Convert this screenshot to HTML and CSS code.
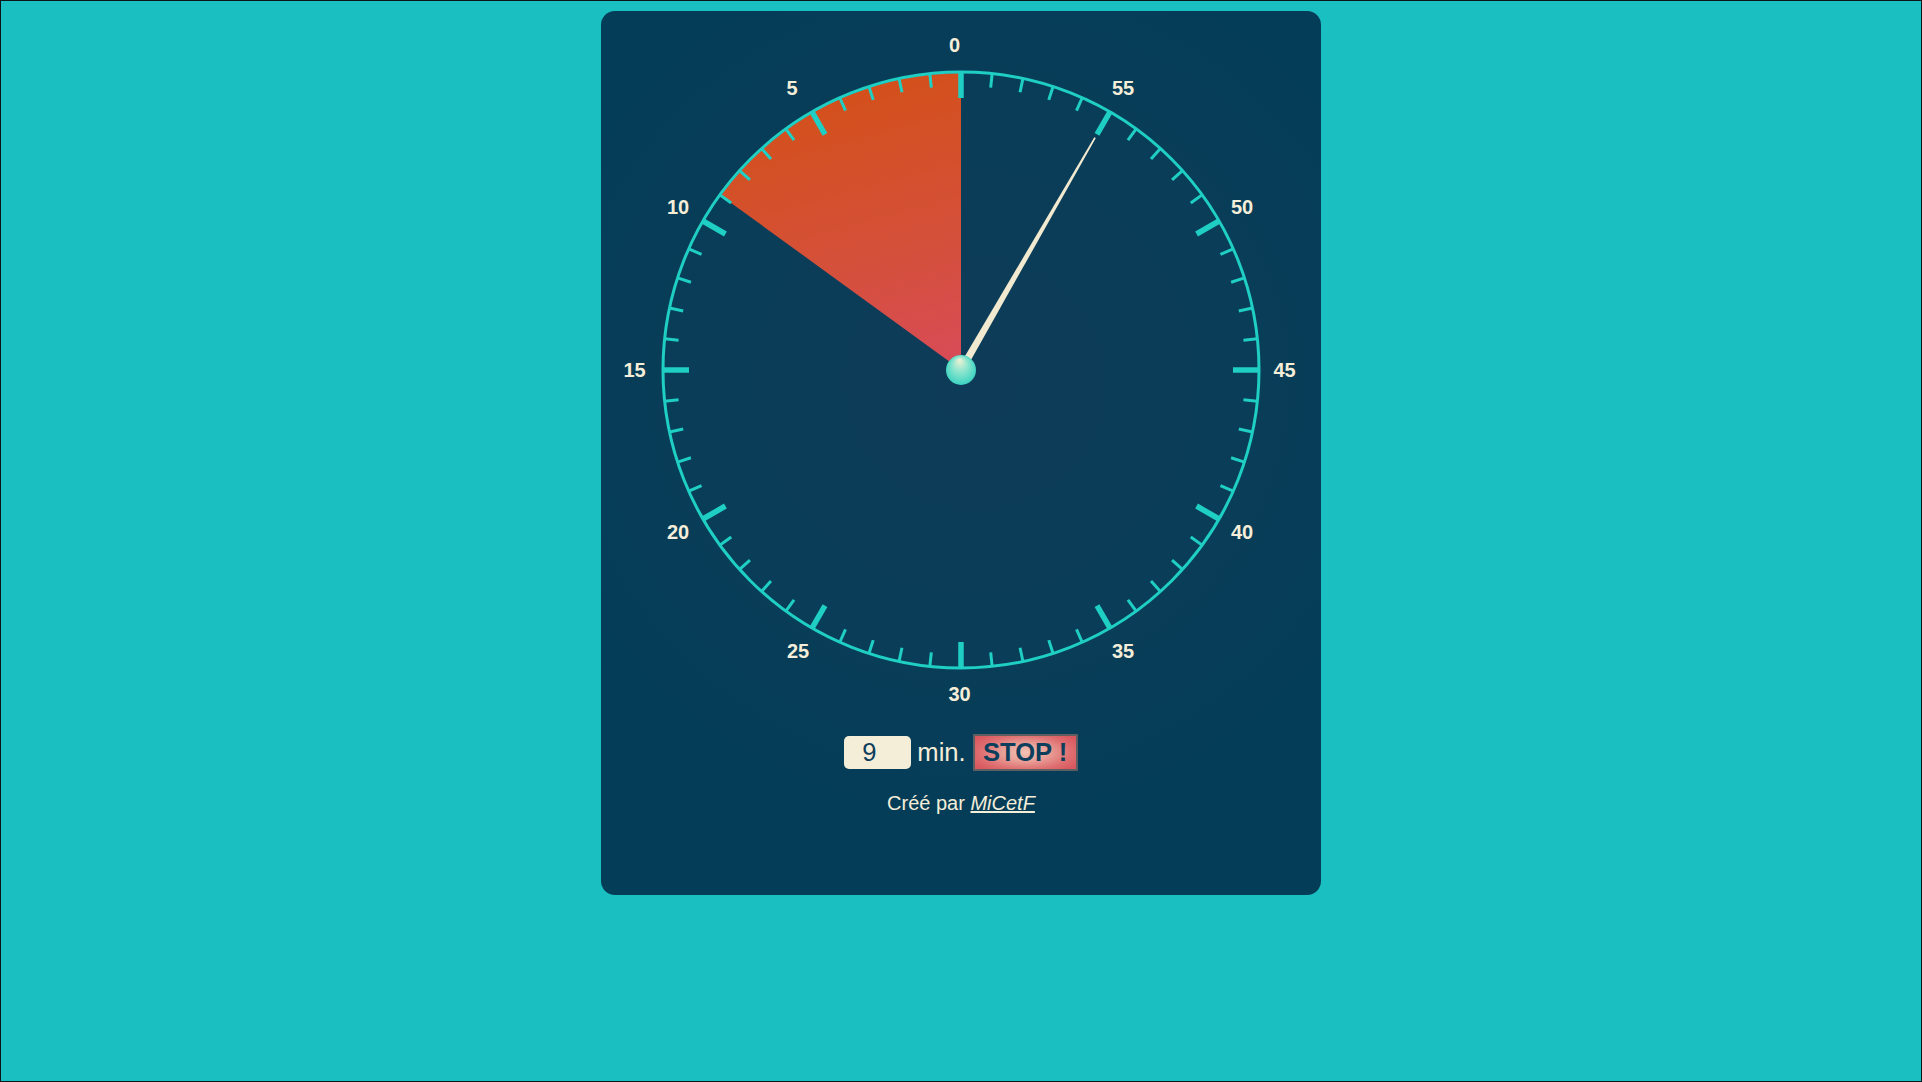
FILE: index.html
```html
<!DOCTYPE html>
<html lang="fr">
<head>
<meta charset="utf-8">
<title>Minuteur</title>
<link rel="stylesheet" href="styles.css">
</head>
<body>
<main class="card">
  <svg class="dial" width="720" height="705" viewBox="0 0 720 705" xmlns="http://www.w3.org/2000/svg">
    <defs>
      <linearGradient id="sectorGrad" gradientUnits="userSpaceOnUse" x1="300" y1="63" x2="380" y2="359">
        <stop offset="0" stop-color="#d3501b"/>
        <stop offset="0.55" stop-color="#d5503a"/>
        <stop offset="1" stop-color="#d84b5a"/>
      </linearGradient>
      <radialGradient id="knobGrad" cx="0.5" cy="0.5" r="0.55" fx="0.45" fy="0.15">
        <stop offset="0" stop-color="#f2f1d4"/>
        <stop offset="0.45" stop-color="#8fe6cf"/>
        <stop offset="1" stop-color="#33d2bf"/>
      </radialGradient>
      <line id="tkMaj" x1="360" y1="61" x2="360" y2="87" class="tick-major"/>
      <line id="tkMin" x1="360" y1="61" x2="360" y2="75" class="tick-minor"/>
    </defs>

    <path class="sector" d="M360 359 L360 62 A297 297 0 0 0 119.7 184.4 Z" fill="url(#sectorGrad)"/>

    <circle class="ring" cx="360" cy="359" r="298"/>

    <g class="ticks">
      <use href="#tkMaj"/>
      <use href="#tkMin" transform="rotate(6 360 359)"/>
      <use href="#tkMin" transform="rotate(12 360 359)"/>
      <use href="#tkMin" transform="rotate(18 360 359)"/>
      <use href="#tkMin" transform="rotate(24 360 359)"/>
      <use href="#tkMaj" transform="rotate(30 360 359)"/>
      <use href="#tkMin" transform="rotate(36 360 359)"/>
      <use href="#tkMin" transform="rotate(42 360 359)"/>
      <use href="#tkMin" transform="rotate(48 360 359)"/>
      <use href="#tkMin" transform="rotate(54 360 359)"/>
      <use href="#tkMaj" transform="rotate(60 360 359)"/>
      <use href="#tkMin" transform="rotate(66 360 359)"/>
      <use href="#tkMin" transform="rotate(72 360 359)"/>
      <use href="#tkMin" transform="rotate(78 360 359)"/>
      <use href="#tkMin" transform="rotate(84 360 359)"/>
      <use href="#tkMaj" transform="rotate(90 360 359)"/>
      <use href="#tkMin" transform="rotate(96 360 359)"/>
      <use href="#tkMin" transform="rotate(102 360 359)"/>
      <use href="#tkMin" transform="rotate(108 360 359)"/>
      <use href="#tkMin" transform="rotate(114 360 359)"/>
      <use href="#tkMaj" transform="rotate(120 360 359)"/>
      <use href="#tkMin" transform="rotate(126 360 359)"/>
      <use href="#tkMin" transform="rotate(132 360 359)"/>
      <use href="#tkMin" transform="rotate(138 360 359)"/>
      <use href="#tkMin" transform="rotate(144 360 359)"/>
      <use href="#tkMaj" transform="rotate(150 360 359)"/>
      <use href="#tkMin" transform="rotate(156 360 359)"/>
      <use href="#tkMin" transform="rotate(162 360 359)"/>
      <use href="#tkMin" transform="rotate(168 360 359)"/>
      <use href="#tkMin" transform="rotate(174 360 359)"/>
      <use href="#tkMaj" transform="rotate(180 360 359)"/>
      <use href="#tkMin" transform="rotate(186 360 359)"/>
      <use href="#tkMin" transform="rotate(192 360 359)"/>
      <use href="#tkMin" transform="rotate(198 360 359)"/>
      <use href="#tkMin" transform="rotate(204 360 359)"/>
      <use href="#tkMaj" transform="rotate(210 360 359)"/>
      <use href="#tkMin" transform="rotate(216 360 359)"/>
      <use href="#tkMin" transform="rotate(222 360 359)"/>
      <use href="#tkMin" transform="rotate(228 360 359)"/>
      <use href="#tkMin" transform="rotate(234 360 359)"/>
      <use href="#tkMaj" transform="rotate(240 360 359)"/>
      <use href="#tkMin" transform="rotate(246 360 359)"/>
      <use href="#tkMin" transform="rotate(252 360 359)"/>
      <use href="#tkMin" transform="rotate(258 360 359)"/>
      <use href="#tkMin" transform="rotate(264 360 359)"/>
      <use href="#tkMaj" transform="rotate(270 360 359)"/>
      <use href="#tkMin" transform="rotate(276 360 359)"/>
      <use href="#tkMin" transform="rotate(282 360 359)"/>
      <use href="#tkMin" transform="rotate(288 360 359)"/>
      <use href="#tkMin" transform="rotate(294 360 359)"/>
      <use href="#tkMaj" transform="rotate(300 360 359)"/>
      <use href="#tkMin" transform="rotate(306 360 359)"/>
      <use href="#tkMin" transform="rotate(312 360 359)"/>
      <use href="#tkMin" transform="rotate(318 360 359)"/>
      <use href="#tkMin" transform="rotate(324 360 359)"/>
      <use href="#tkMaj" transform="rotate(330 360 359)"/>
      <use href="#tkMin" transform="rotate(336 360 359)"/>
      <use href="#tkMin" transform="rotate(342 360 359)"/>
      <use href="#tkMin" transform="rotate(348 360 359)"/>
      <use href="#tkMin" transform="rotate(354 360 359)"/>
    </g>

    <g class="labels">
      <text x="348" y="40.5">0</text>
      <text x="185.5" y="83.5">5</text>
      <text x="66" y="202.5">10</text>
      <text x="22.5" y="365.5">15</text>
      <text x="66" y="527.5">20</text>
      <text x="186" y="646.5">25</text>
      <text x="347.5" y="690">30</text>
      <text x="511" y="646.5">35</text>
      <text x="630" y="527.5">40</text>
      <text x="672.5" y="365.5">45</text>
      <text x="630" y="202.5">50</text>
      <text x="511" y="83.5">55</text>
    </g>

    <polygon class="hand" points="363.2,360.9 356.8,357.2 493.3,126.2 494.8,127.1"/>
    <circle cx="360" cy="359" r="15" fill="url(#knobGrad)"/>
  </svg>

  <div class="controls">
    <input class="minutes" type="text" value="9">
    <span class="unit">min.</span>
    <button class="stop" type="button">STOP !</button>
  </div>

  <p class="credit">Créé par <a href="#">MiCetF</a></p>
</main>
</body>
</html>
```

FILE: styles.css
```css
html {
  margin: 0;
  padding: 0;
}

body {
  margin: 0;
  box-sizing: border-box;
  width: 1922px;
  height: 1082px;
  border: 1px solid #0b1416;
  background: #1abfc2;
  font-family: "Liberation Sans", Arial, sans-serif;
  overflow: hidden;
}

.card {
  box-sizing: border-box;
  width: 720px;
  height: 884px;
  margin: 10px auto 0;
  border-radius: 14px;
  background: radial-gradient(ellipse 70% 55% at 52% 42%, #0e3c58 0%, #0a3d58 50%, #033d58 100%);
  display: flex;
  flex-direction: column;
  align-items: center;
}

.dial {
  display: block;
  flex: none;
}

.ring {
  fill: none;
  stroke: #1fcfc3;
  stroke-width: 3;
}

.tick-major {
  stroke: #1fcfc3;
  stroke-width: 5.5;
}

.tick-minor {
  stroke: #1fcfc3;
  stroke-width: 3;
}

.labels text {
  font-family: "Liberation Sans", Arial, sans-serif;
  font-weight: bold;
  font-size: 20px;
  fill: #f5eed8;
}

.hand {
  fill: #f1ead0;
}

.controls {
  display: flex;
  align-items: center;
  gap: 6px;
  margin-top: 18px;
  height: 37px;
}

.minutes {
  box-sizing: border-box;
  width: 67px;
  height: 33px;
  border: none;
  border-radius: 5px;
  background: #f4eed8;
  color: #0e3d5c;
  font-family: "Liberation Sans", Arial, sans-serif;
  font-size: 25.6px;
  padding: 0 0 0 18px;
  margin: 0;
  outline: none;
}

.unit {
  color: #f5eed8;
  font-size: 25.6px;
  line-height: 1;
  margin-right: 1px;
}

.stop {
  box-sizing: border-box;
  width: 105px;
  height: 37px;
  margin: 0;
  padding: 0;
  border: 2px solid #5f5f62;
  border-radius: 1px;
  background: radial-gradient(ellipse 60% 70% at 50% 50%, #f3c2b4 0%, #eaa39a 35%, #de6e70 75%, #d9585f 100%);
  color: #0d3f5c;
  font-family: "Liberation Sans", Arial, sans-serif;
  font-weight: bold;
  font-size: 25.6px;
  line-height: 33px;
}

.credit {
  margin: 20px 0 0;
  color: #f5eed8;
  font-size: 20px;
  line-height: 24px;
}

.credit a {
  color: #f5eed8;
  font-style: italic;
  text-decoration: underline;
}
```
